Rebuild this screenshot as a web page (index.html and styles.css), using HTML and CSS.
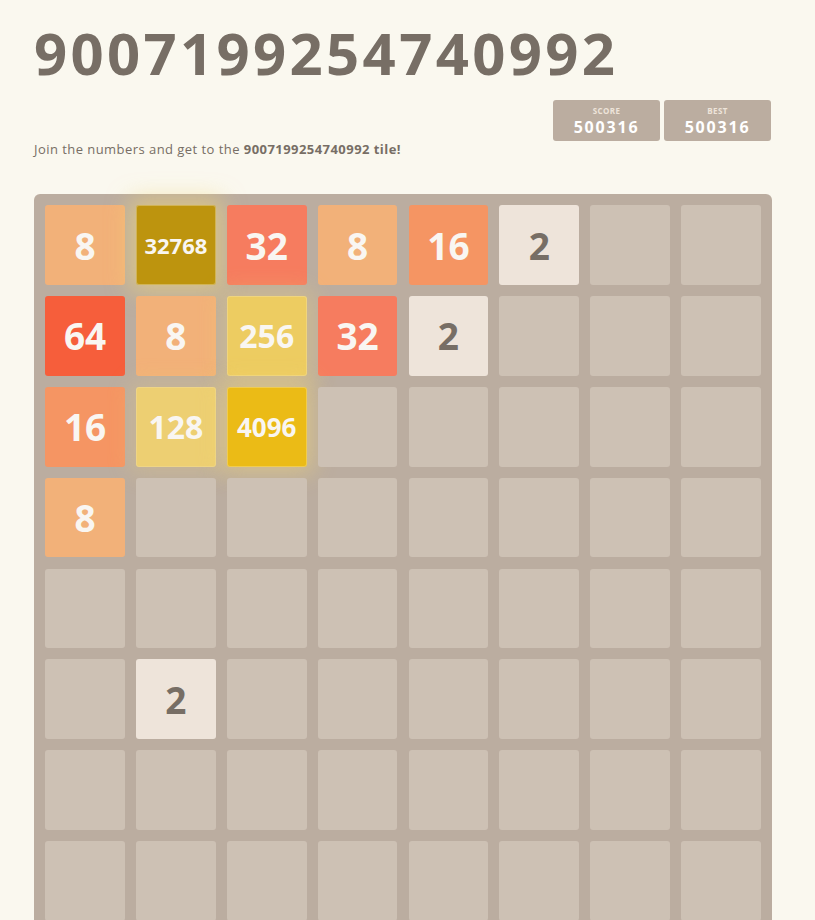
FILE: index.html
```html
<!DOCTYPE html>
<html lang="en">
<head>
<meta charset="utf-8">
<title>9007199254740992</title>
<link rel="stylesheet" href="styles.css">
</head>
<body>
<div class="container">
  <h1 class="title">9007199254740992</h1>
  <div class="scores">
    <div class="score-box"><div class="label">Score</div><div class="value">500316</div></div>
    <div class="score-box"><div class="label">Best</div><div class="value">500316</div></div>
  </div>
  <p class="intro">Join the numbers and get to the <strong>9007199254740992 tile!</strong></p>
  <div class="board">
    <div class="cell t8">8</div><div class="cell t32768">32768</div><div class="cell t32">32</div><div class="cell t8">8</div><div class="cell t16">16</div><div class="cell t2">2</div><div class="cell"></div><div class="cell"></div>
    <div class="cell t64">64</div><div class="cell t8">8</div><div class="cell t256">256</div><div class="cell t32">32</div><div class="cell t2">2</div><div class="cell"></div><div class="cell"></div><div class="cell"></div>
    <div class="cell t16">16</div><div class="cell t128">128</div><div class="cell t4096">4096</div><div class="cell"></div><div class="cell"></div><div class="cell"></div><div class="cell"></div><div class="cell"></div>
    <div class="cell t8">8</div><div class="cell"></div><div class="cell"></div><div class="cell"></div><div class="cell"></div><div class="cell"></div><div class="cell"></div><div class="cell"></div>
    <div class="cell"></div><div class="cell"></div><div class="cell"></div><div class="cell"></div><div class="cell"></div><div class="cell"></div><div class="cell"></div><div class="cell"></div>
    <div class="cell"></div><div class="cell t2">2</div><div class="cell"></div><div class="cell"></div><div class="cell"></div><div class="cell"></div><div class="cell"></div><div class="cell"></div>
    <div class="cell"></div><div class="cell"></div><div class="cell"></div><div class="cell"></div><div class="cell"></div><div class="cell"></div><div class="cell"></div><div class="cell"></div>
    <div class="cell"></div><div class="cell"></div><div class="cell"></div><div class="cell"></div><div class="cell"></div><div class="cell"></div><div class="cell"></div><div class="cell"></div>
  </div>
</div>
</body>
</html>
```

FILE: styles.css
```css
html, body {
  margin: 0;
  padding: 0;
  background: #faf8ef;
  color: #776e65;
  font-family: "Open Sans", "Liberation Sans", sans-serif;
}

.container {
  width: 738px;
  margin-left: 34px;
  padding-top: 24px;
}

.title {
  margin: 0;
  font-size: 58px;
  line-height: 58px;
  font-weight: 700;
  letter-spacing: 3.35px;
  color: #776e65;
}

.scores {
  display: flex;
  justify-content: flex-end;
  gap: 4px;
  margin-top: 18px;
  margin-right: 1px;
}

.score-box {
  width: 107px;
  height: 41px;
  box-sizing: border-box;
  padding-top: 5px;
  background: #bbada0;
  border-radius: 3px;
  text-align: center;
}

.score-box .label {
  font-size: 8px;
  line-height: 11px;
  font-weight: 700;
  text-transform: uppercase;
  letter-spacing: 0.4px;
  color: #eee4da;
}

.score-box .value {
  font-size: 16px;
  line-height: 22px;
  font-weight: 700;
  letter-spacing: 1.8px;
  color: #ffffff;
}

.intro {
  margin: 0;
  font-size: 13px;
  line-height: 16px;
  letter-spacing: 0.45px;
  color: #776e65;
}

.intro strong {
  font-weight: 700;
}

.board {
  margin-top: 37px;
  width: 738px;
  height: 738px;
  box-sizing: border-box;
  padding: 11.25px;
  background: #bbada0;
  border-radius: 6px;
  display: grid;
  grid-template-columns: repeat(8, 1fr);
  grid-template-rows: repeat(8, 1fr);
  gap: 11.25px;
}

.cell {
  background: #cdc1b4;
  border-radius: 3px;
  display: flex;
  align-items: center;
  justify-content: center;
  font-weight: 700;
  font-size: 37px;
  color: #f9f6f2;
}

.t2 { background: #eee4da; color: #776e65; }
.t8 { background: #f2b179; }
.t16 { background: #f59563; }
.t32 { background: #f67c5f; }
.t64 { background: #f65e3b; }
.t128 {
  background: #edcf72;
  font-size: 32px;
  box-shadow: 0 0 22px 7px rgba(243, 215, 116, 0.24), inset 0 0 0 1px rgba(255, 255, 255, 0.14);
}
.t256 {
  background: #edcc61;
  font-size: 32px;
  box-shadow: 0 0 22px 7px rgba(243, 215, 116, 0.32), inset 0 0 0 1px rgba(255, 255, 255, 0.19);
}
.t4096 {
  background: #ebbb16;
  font-size: 26px;
  box-shadow: 0 0 22px 7px rgba(243, 215, 116, 0.45), inset 0 0 0 1px rgba(255, 255, 255, 0.25);
}
.t32768 {
  background: #bd940e;
  font-size: 22px;
  box-shadow: 0 0 22px 7px rgba(243, 215, 116, 0.55), inset 0 0 0 1px rgba(255, 255, 255, 0.3);
}
```
